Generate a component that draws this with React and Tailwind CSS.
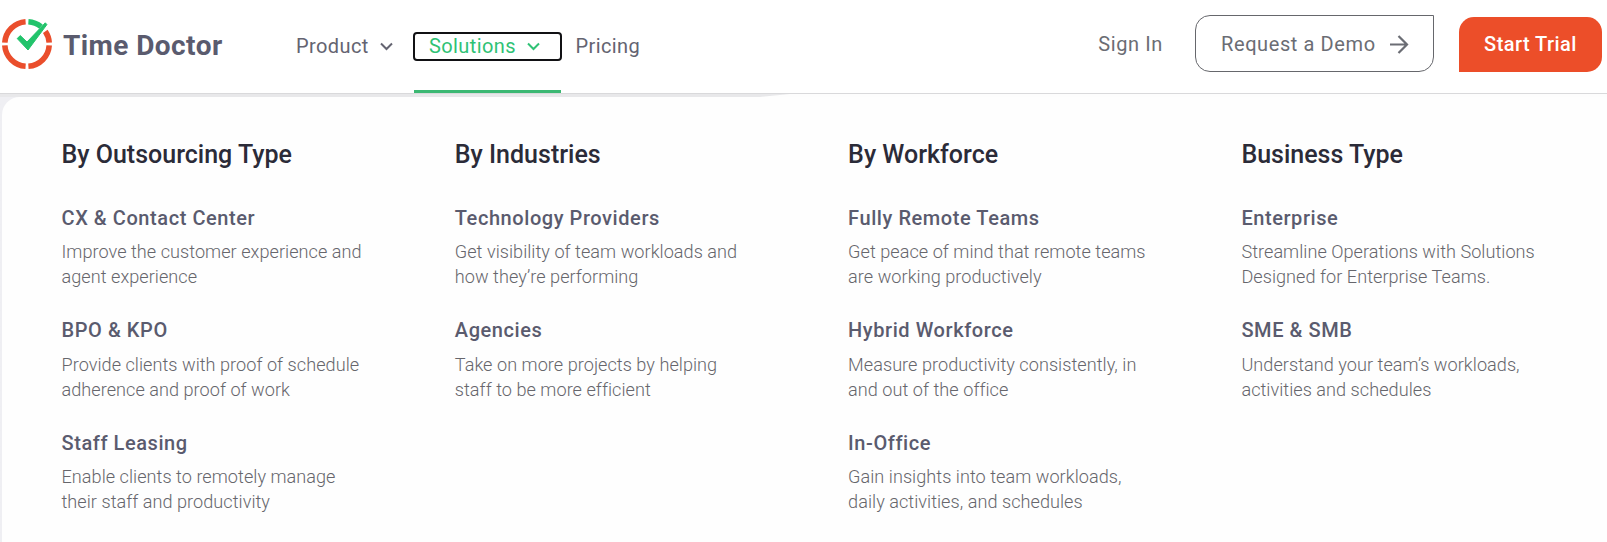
const columns = [
  {
    title: 'By Outsourcing Type',
    items: [
      ['CX & Contact Center', 'Improve the customer experience and', 'agent experience'],
      ['BPO & KPO', 'Provide clients with proof of schedule', 'adherence and proof of work'],
      ['Staff Leasing', 'Enable clients to remotely manage', 'their staff and productivity'],
    ],
  },
  {
    title: 'By Industries',
    items: [
      ['Technology Providers', 'Get visibility of team workloads and', 'how they’re performing'],
      ['Agencies', 'Take on more projects by helping', 'staff to be more efficient'],
    ],
  },
  {
    title: 'By Workforce',
    items: [
      ['Fully Remote Teams', 'Get peace of mind that remote teams', 'are working productively'],
      ['Hybrid Workforce', 'Measure productivity consistently, in', 'and out of the office'],
      ['In-Office', 'Gain insights into team workloads,', 'daily activities, and schedules'],
    ],
  },
  {
    title: 'Business Type',
    items: [
      ['Enterprise', 'Streamline Operations with Solutions', 'Designed for Enterprise Teams.'],
      ['SME & SMB', 'Understand your team’s workloads,', 'activities and schedules'],
    ],
  },
];

function Logo() {
  return (
    <svg className="ml-[2px] h-[52px] w-[50px] shrink-0" viewBox="2 18 50 52" fill="none">
      <g stroke="#ea4e2c" strokeWidth="5.6">
        <path d="M25.6 21.7A22.3 22.3 0 0 0 4.8 42.6" />
        <path d="M4.8 45.4A22.3 22.3 0 0 0 25.6 66.3" />
        <path d="M28.4 66.3A22.3 22.3 0 0 0 49.2 45.4" />
        <path d="M49.2 42.6A22.3 22.3 0 0 0 45.3 31.4" />
      </g>
      <path d="M28.4 21.7A22.3 22.3 0 0 1 41 26.6" stroke="#22c36b" strokeWidth="5.6" />
      <path d="M17.2 38.5L20.3 35.6L27 42L45.3 22.8L46.9 24.6L28 50Z" fill="#22c36b" stroke="#22c36b" strokeWidth="1" strokeLinejoin="round" />
    </svg>
  );
}

function Chevron() {
  return (
    <svg className="mt-px h-[9px] w-[13px]" viewBox="0 0 13 9" fill="none" stroke="currentColor" strokeWidth="2">
      <path d="M1 1.5L6.5 7L12 1.5" />
    </svg>
  );
}

export default function App() {
  return (
    <div className="flex h-[542px] w-full flex-col overflow-hidden bg-[#f3f3f5] font-['Roboto',sans-serif]">
      <header className="flex h-[94px] shrink-0 items-start justify-between border-b border-[#d9d9db] bg-white text-xl leading-[26px] tracking-[0.4px] text-[#646471]">
        <div className="flex items-start">
          <div className="flex w-[296px] items-start pt-[18px]">
            <Logo />
            <span className="ml-[11px] text-[28px] leading-[56px] font-bold tracking-[0.43px] text-[#5a5b6e]">Time Doctor</span>
          </div>
          <nav className="flex">
            <a className="mt-[33px] flex h-[26px] w-[118px] items-center">
              Product
              <span className="ml-[11.7px]"><Chevron /></span>
            </a>
            <a className="flex h-[93px] w-[147px] flex-col border-b-[3px] border-[#3cb873] pt-[33px] text-[#2fc275]">
              <span className="flex h-[27px] items-center rounded-[3px] pb-px pl-[15px] outline-2 -outline-offset-1 outline-[#111114]">
                Solutions
                <span className="ml-[11px]"><Chevron /></span>
              </span>
            </a>
            <a className="mt-[33px] ml-[14.5px]">Pricing</a>
          </nav>
        </div>
        <div className="flex items-start pr-[5px] text-[#6b6d74]">
          <a className="mt-[31px] mr-[32px] tracking-[0.6px]">Sign In</a>
          <a className="mt-[15px] mr-[25px] flex h-[57px] w-[239px] items-center rounded-[15px] rounded-tr-none border border-[#66676c] pl-[25px] tracking-[0.6px]">
            Request a Demo
            <svg className="ml-[13.4px] h-[20px] w-[20px]" viewBox="0 0 20 20" fill="none" stroke="currentColor" strokeWidth="2.2">
              <path d="M1 10.5H18M9.5 2L18 10.5L9.5 19" />
            </svg>
          </a>
          <a className="mt-[17px] flex h-[55px] w-[143px] items-center justify-center rounded-[15px] rounded-bl-none bg-[#ec4e29] pb-px font-medium tracking-[0.45px] text-white">Start Trial</a>
        </div>
      </header>
      <div className="flex h-[3px] shrink-0 bg-[#fdfdfd]">
        <svg className="h-[3px] w-[790px]" viewBox="0 0 790 3">
          <path d="M0 0H790L760 3H0Z" fill="#e8e8ea" />
        </svg>
      </div>
      <div className="flex min-h-0 flex-1 bg-linear-to-r from-[#efeff3] to-[#f8f8f9] pr-[5px] pl-[2px]">
        <main className="grid flex-1 grid-cols-[repeat(4,393.3px)] rounded-tl-[18px] bg-[#fefefe] pt-[42px] pl-[59.5px]">
          {columns.map((column) => (
            <section key={column.title}>
              <h2 className="mb-[33.6px] text-[25px] leading-[32px] font-medium text-[#2b2b38]">{column.title}</h2>
              {column.items.map(([name, first, second]) => (
                <div key={name} className="h-[112.5px]">
                  <h3 className="mb-[8.6px] text-xl leading-[26px] font-medium tracking-[0.57px] text-[#5a5b6e]">{name}</h3>
                  <p className="text-[18.1px] leading-[25px] font-light tracking-[0.04px] whitespace-nowrap text-[#66666c]">
                    {first}
                    <br />
                    {second}
                  </p>
                </div>
              ))}
            </section>
          ))}
        </main>
      </div>
    </div>
  );
}
